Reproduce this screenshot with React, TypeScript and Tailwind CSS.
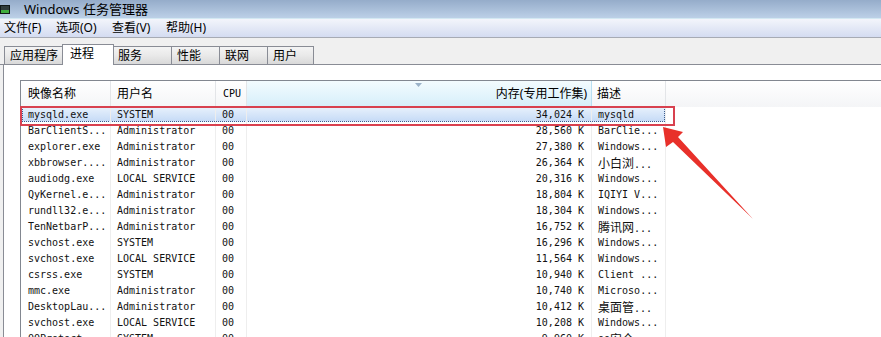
import React from "react";

type Row = [string, string, string, string, string];

const rows: Row[] = [
  ["mysqld.exe", "SYSTEM", "00", "34,024 K", "mysqld"],
  ["BarClientS...", "Administrator", "00", "28,560 K", "BarClie..."],
  ["explorer.exe", "Administrator", "00", "27,380 K", "Windows..."],
  ["xbbrowser....", "Administrator", "00", "26,364 K", "小白浏..."],
  ["audiodg.exe", "LOCAL SERVICE", "00", "20,316 K", "Windows..."],
  ["QyKernel.e...", "Administrator", "00", "18,804 K", "IQIYI V..."],
  ["rundll32.e...", "Administrator", "00", "18,304 K", "Windows..."],
  ["TenNetbarP...", "Administrator", "00", "16,752 K", "腾讯网..."],
  ["svchost.exe", "SYSTEM", "00", "16,296 K", "Windows..."],
  ["svchost.exe", "LOCAL SERVICE", "00", "11,564 K", "Windows..."],
  ["csrss.exe", "SYSTEM", "00", "10,940 K", "Client ..."],
  ["mmc.exe", "Administrator", "00", "10,740 K", "Microso..."],
  ["DesktopLau...", "Administrator", "00", "10,412 K", "桌面管..."],
  ["svchost.exe", "LOCAL SERVICE", "00", "10,208 K", "Windows..."],
  ["QQProtect...", "SYSTEM", "00", "9,960 K", "QQ安全..."],
];

function Mixed({ text }: { text: string }) {
  const parts = text.split(/([\u4e00-\u9fff]+)/);
  return (
    <>
      {parts.map((p, i) =>
        /[\u4e00-\u9fff]/.test(p) ? (
          <span key={i} className="text-[12px] font-['Noto_Sans_CJK_SC',sans-serif]">
            {p}
          </span>
        ) : (
          <span key={i}>{p}</span>
        )
      )}
    </>
  );
}

const tabs = [
  { label: "应用程序", w: "w-[59px]", pl: "pl-[5px]", sel: false },
  { label: "进程", w: "w-[52px]", pl: "pl-[7px]", sel: true },
  { label: "服务", w: "w-[59px]", pl: "pl-[4px]", sel: false },
  { label: "性能", w: "w-[49px]", pl: "pl-[5px]", sel: false },
  { label: "联网", w: "w-[49px]", pl: "pl-[5px]", sel: false },
  { label: "用户", w: "w-[47px]", pl: "pl-[5px]", sel: false },
];

export default function App() {
  return (
    <div className="relative w-[881px] h-[337px] overflow-hidden bg-white text-[12px] text-black font-['Noto_Sans','Noto_Sans_CJK_SC',sans-serif]">
      {/* Title bar */}
      <div className="h-[19px] flex items-center bg-gradient-to-b from-[#95acca] to-[#bcd0e7] border-b border-[#d3e8f2]">
        <div className="w-[10px] h-[9px] bg-[#2f3b3b] border border-[#101818] flex items-end">
          <div className="w-full h-[3px] bg-[#3fae3f]" />
        </div>
        <span className="ml-[14px] text-[13px] leading-none text-black">Windows 任务管理器</span>
      </div>

      {/* Menu bar */}
      <div className="h-[19px] flex items-center bg-gradient-to-b from-[#f3f5fb] to-[#d4dcf1] border-b border-[#a7abb4] leading-none">
        <span className="ml-[4px] w-[52px]">文件(F)</span>
        <span className="w-[56px]">选项(O)</span>
        <span className="w-[54px]">查看(V)</span>
        <span>帮助(H)</span>
      </div>

      {/* Tab strip */}
      <div className="h-[27px] bg-[#f0f0f0] flex items-end pl-[4px] border-b border-[#898c95]">
        {tabs.map((t, i) =>
          t.sel ? (
            <div
              key={t.label}
              className={`${t.w} ${t.pl} -ml-px -mb-px relative z-10 h-[21px] bg-white border border-b-0 border-[#898c95] pt-[1px] leading-[16px]`}
            >
              {t.label}
            </div>
          ) : (
            <div
              key={t.label}
              className={`${t.w} ${t.pl} ${i === 0 ? "" : "-ml-px"} h-[18px] bg-gradient-to-b from-[#f4f4f4] via-[#e9e9e9] to-[#d9d9d9] border border-b-0 border-[#898c95] pt-[1px] leading-[16px]`}
            >
              {t.label}
            </div>
          )
        )}
      </div>

      {/* Panel */}
      <div className="bg-[#f0f0f0] pl-[3px] h-[300px]">
        <div className="h-full bg-white border-l border-[#898c95] pt-[15px]">
          <div className="ml-[16px] h-full border-t border-l border-[#828790]">
            {/* Header */}
            <div className="grid grid-cols-[90px_105px_31px_345px_74px_1fr] h-[26px] leading-[26px]">
              <div className="pl-[7px] bg-gradient-to-b from-white to-[#f4f5f7] border-r border-[#e3e5e8]">映像名称</div>
              <div className="pl-[6px] bg-gradient-to-b from-white to-[#f4f5f7] border-r border-[#e3e5e8]">用户名</div>
              <div className="pl-[7px] bg-gradient-to-b from-white to-[#f4f5f7] border-r border-[#e3e5e8] text-[10px] font-['DejaVu_Sans_Mono',monospace]">CPU</div>
              <div className="relative pr-[4px] text-right bg-gradient-to-b from-[#f3fbfe] to-[#d5eefa] border-r border-[#b9dff2]">
                <svg className="absolute left-[168px] top-[2px]" width="7" height="4" viewBox="0 0 7 4">
                  <polygon points="0,0 7,0 3.5,4" fill="#9bb2c8" />
                </svg>
                内存(专用工作集)
              </div>
              <div className="pl-[5px] bg-gradient-to-b from-white to-[#f4f5f7] border-r border-[#e3e5e8]">描述</div>
              <div className="bg-gradient-to-b from-white to-[#f4f5f7]" />
            </div>

            {/* Rows */}
            <div className="text-[10px] font-['DejaVu_Sans_Mono','Noto_Sans_CJK_SC',monospace] text-[#111]">
              {rows.map((r, i) => (
                <div
                  key={i}
                  className="relative grid grid-cols-[90px_105px_31px_345px_74px_1fr] h-[16px] leading-[16px]"
                >
                  {i === 0 && (
                    <div className="absolute left-[1px] top-0 w-[643px] h-[15px] bg-gradient-to-b from-[#e6f0fc] to-[#c6dbf6] border border-dotted border-[#3c5c8c]" />
                  )}
                  <div className="relative pl-[7px] whitespace-nowrap overflow-hidden border-r border-[#eeeeee]">{r[0]}</div>
                  <div className="relative pl-[6px] whitespace-nowrap overflow-hidden border-r border-[#eeeeee]">{r[1]}</div>
                  <div className="relative pl-[6px] whitespace-nowrap overflow-hidden border-r border-[#eeeeee]">{r[2]}</div>
                  <div className="relative pr-[7px] text-right whitespace-nowrap overflow-hidden border-r border-[#eeeeee]">{r[3]}</div>
                  <div className="relative pl-[6px] whitespace-nowrap overflow-hidden border-r border-[#eeeeee]">
                    <Mixed text={r[4]} />
                  </div>
                  <div />
                </div>
              ))}
            </div>
          </div>
        </div>
      </div>

      {/* Annotation: red rectangle */}
      <div className="absolute left-[20px] top-[106px] w-[655px] h-[20px] border-2 border-[#d8414f] pointer-events-none" />

      {/* Annotation: red arrow */}
      <svg className="absolute left-0 top-0 pointer-events-none" width="881" height="337" viewBox="0 0 881 337">
        <polygon
          points="663,127 683,132 678,137 753,219 673,142 666,147"
          fill="#e8302a"
        />
      </svg>
    </div>
  );
}
